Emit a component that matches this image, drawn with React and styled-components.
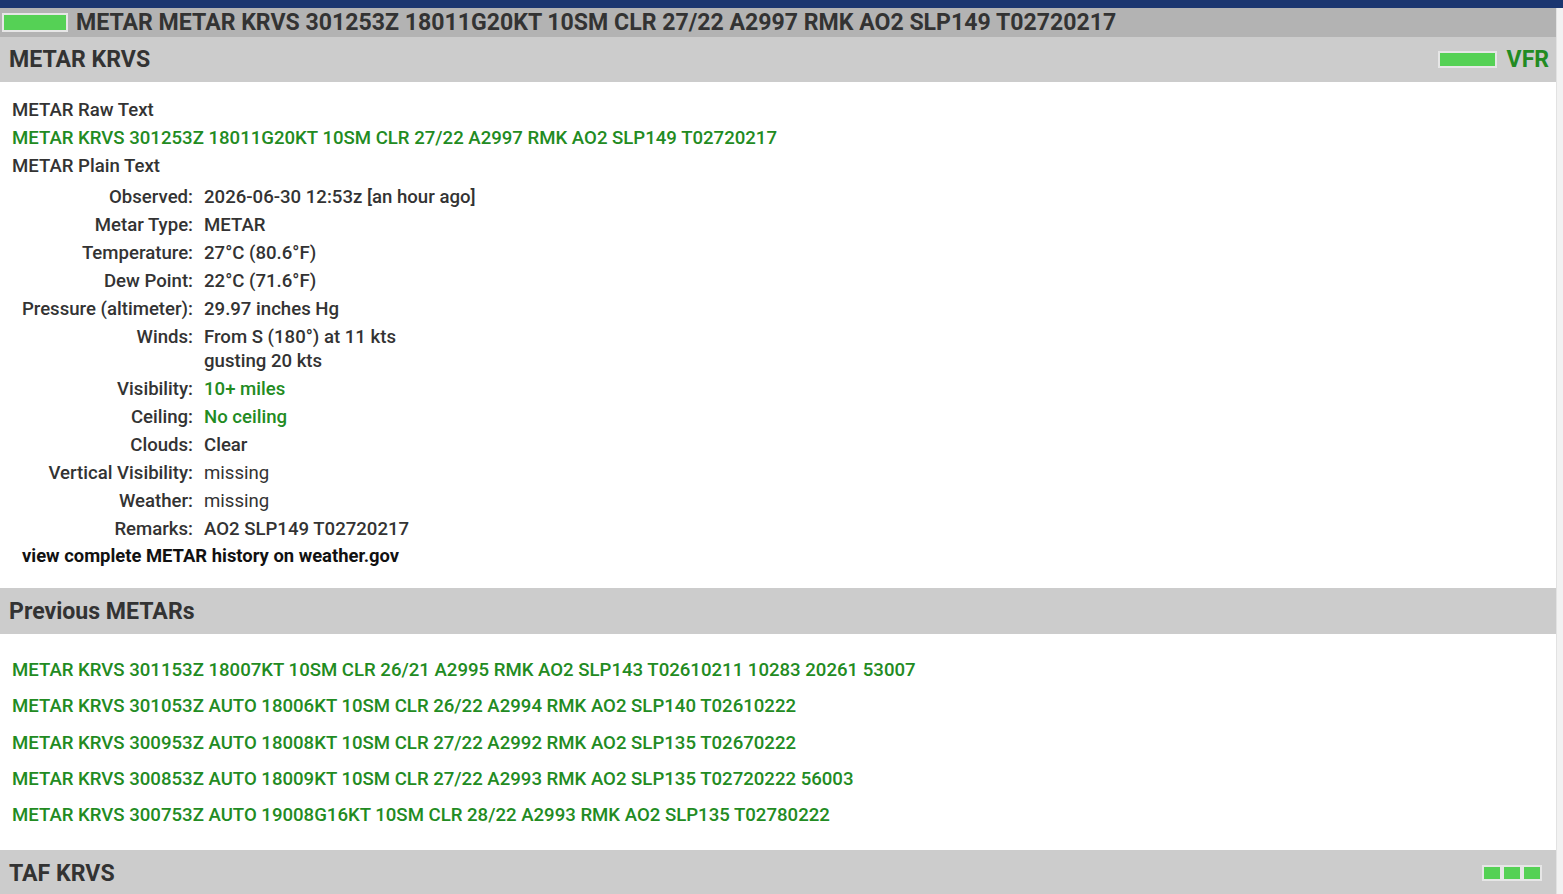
import React from 'react'
import styled, { createGlobalStyle } from 'styled-components'

const GlobalStyle = createGlobalStyle`
  html, body {
    margin: 0;
    padding: 0;
    background: #ffffff;
  }
  body {
    font-family: Roboto, "Noto Sans", "Liberation Sans", sans-serif;
    color: #333333;
    overflow: hidden;
  }
`

const TopStripe = styled.div`
  height: 8px;
  background-color: #1b3670;
`

const Page = styled.div`
  display: flex;
  align-items: stretch;
  min-height: 886px;
`

const Main = styled.div`
  width: 1556px;
  flex: none;
`

const Gutter = styled.div`
  flex: 1;
  background-color: #f2f2f2;
  border-left: 1px solid #e2e2e2;
`

const TitleBar = styled.div`
  height: 29px;
  background-color: #b3b3b3;
  display: flex;
  align-items: center;
  gap: 8px;
  padding-left: 2px;
`

const Badge = styled.span`
  display: inline-block;
  box-sizing: border-box;
  width: ${p => p.$w}px;
  height: ${p => p.$h}px;
  background-color: #55d155;
  border: 2px solid #e6e6e6;
`

const BadgeGroup = styled.span`
  display: inline-flex;
  margin-right: 7px;
`

const TitleText = styled.h1`
  margin: 0;
  font-size: 23.1px;
  font-weight: 700;
  color: #333333;
  white-space: nowrap;
`

const SectionHeader = styled.div`
  height: ${p => p.$h || 45}px;
  background-color: #cccccc;
  display: flex;
  align-items: center;
  justify-content: space-between;
  padding: 0 7px 0 9px;
`

const SectionTitle = styled.h2`
  margin: 0;
  font-size: 23.1px;
  font-weight: 700;
  color: #333333;
`

const Category = styled.div`
  display: flex;
  align-items: center;
  gap: 10px;
  font-size: 23px;
  font-weight: 700;
  color: #228b22;
`

const Body = styled.div`
  padding: 14px 12px 20px;
  font-size: 18.6px;
  line-height: 28px;
`

const Heading = styled.div`
  font-weight: 500;
  color: #333333;
`

const RawText = styled.div`
  font-weight: 500;
  color: #228b22;
`

const Grid = styled.div`
  display: grid;
  grid-template-columns: 181px auto;
  column-gap: 11px;
  justify-content: start;
  margin-top: 3px;
`

const Label = styled.div`
  text-align: right;
  font-weight: 500;
  line-height: 24px;
  padding: 2px 0;
  color: #333333;
  white-space: nowrap;
`

const Value = styled.div`
  font-weight: ${p => (p.$plain ? 400 : 500)};
  line-height: 24px;
  padding: 2px 0;
  color: ${p => (p.$green ? '#228b22' : '#333333')};
`

const HistoryLink = styled.a`
  display: block;
  margin: 0 0 0 10px;
  line-height: 25px;
  color: #111111;
  font-weight: 700;
  font-size: 18.4px;
  text-decoration: none;
`

const List = styled.div`
  padding: 18px 12px 17px;
  display: flex;
  flex-direction: column;
`

const ListItem = styled.div`
  font-size: 18.6px;
  font-weight: 500;
  line-height: 36.3px;
  color: #228b22;
  white-space: nowrap;
`

const rows = [
  { label: 'Observed:', value: '2026-06-30 12:53z [an hour ago]' },
  { label: 'Metar Type:', value: 'METAR' },
  { label: 'Temperature:', value: '27°C (80.6°F)' },
  { label: 'Dew Point:', value: '22°C (71.6°F)' },
  { label: 'Pressure (altimeter):', value: '29.97 inches Hg' },
  { label: 'Winds:', value: ['From S (180°) at 11 kts', 'gusting 20 kts'] },
  { label: 'Visibility:', value: '10+ miles', green: true },
  { label: 'Ceiling:', value: 'No ceiling', green: true },
  { label: 'Clouds:', value: 'Clear' },
  { label: 'Vertical Visibility:', value: 'missing', plain: true },
  { label: 'Weather:', value: 'missing', plain: true },
  { label: 'Remarks:', value: 'AO2 SLP149 T02720217' },
]

const previous = [
  'METAR KRVS 301153Z 18007KT 10SM CLR 26/21 A2995 RMK AO2 SLP143 T02610211 10283 20261 53007',
  'METAR KRVS 301053Z AUTO 18006KT 10SM CLR 26/22 A2994 RMK AO2 SLP140 T02610222',
  'METAR KRVS 300953Z AUTO 18008KT 10SM CLR 27/22 A2992 RMK AO2 SLP135 T02670222',
  'METAR KRVS 300853Z AUTO 18009KT 10SM CLR 27/22 A2993 RMK AO2 SLP135 T02720222 56003',
  'METAR KRVS 300753Z AUTO 19008G16KT 10SM CLR 28/22 A2993 RMK AO2 SLP135 T02780222',
]

const raw = 'METAR KRVS 301253Z 18011G20KT 10SM CLR 27/22 A2997 RMK AO2 SLP149 T02720217'

export default function App() {
  return (
    <>
      <GlobalStyle />
      <TopStripe />
      <Page>
        <Main>
          <TitleBar>
            <Badge $w={66} $h={19} />
            <TitleText>METAR {raw}</TitleText>
          </TitleBar>

          <SectionHeader>
            <SectionTitle>METAR KRVS</SectionTitle>
            <Category>
              <Badge $w={59} $h={17} />
              VFR
            </Category>
          </SectionHeader>

          <Body>
            <Heading>METAR Raw Text</Heading>
            <RawText>{raw}</RawText>
            <Heading>METAR Plain Text</Heading>
            <Grid>
              {rows.map(r => (
                <React.Fragment key={r.label}>
                  <Label>{r.label}</Label>
                  <Value $green={r.green} $plain={r.plain}>
                    {Array.isArray(r.value)
                      ? r.value.map(line => <div key={line}>{line}</div>)
                      : r.value}
                  </Value>
                </React.Fragment>
              ))}
            </Grid>
            <HistoryLink href="#">view complete METAR history on weather.gov</HistoryLink>
          </Body>

          <SectionHeader $h={46}>
            <SectionTitle>Previous METARs</SectionTitle>
          </SectionHeader>
          <List>
            {previous.map(m => (
              <ListItem key={m}>{m}</ListItem>
            ))}
          </List>

          <SectionHeader $h={46}>
            <SectionTitle>TAF KRVS</SectionTitle>
            <BadgeGroup>
              <Badge $w={20} $h={16} />
              <Badge $w={20} $h={16} />
              <Badge $w={20} $h={16} />
            </BadgeGroup>
          </SectionHeader>
        </Main>
        <Gutter />
      </Page>
    </>
  )
}
